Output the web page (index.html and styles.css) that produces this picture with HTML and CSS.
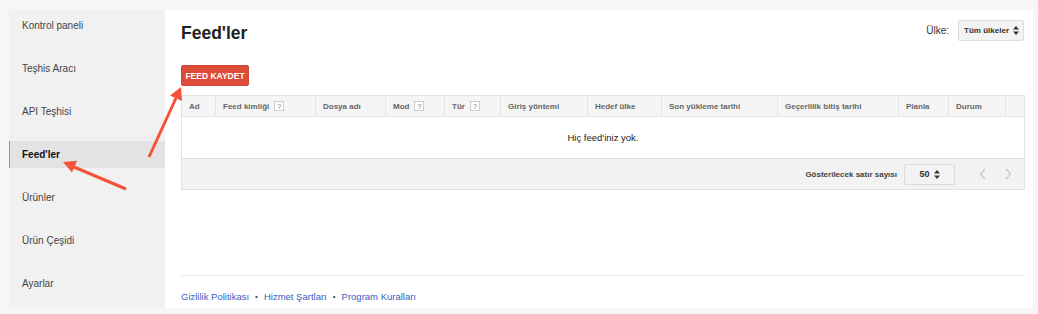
FILE: index.html
```html
<!DOCTYPE html>
<html lang="tr">
<head>
  <meta charset="UTF-8">
  <title>Feed'ler</title>
  <link rel="stylesheet" href="styles.css">
</head>
<body>
  <div class="layout">
    <nav class="sidebar">
      <a class="nav-item" href="#">Kontrol paneli</a>
      <a class="nav-item" href="#">Teşhis Aracı</a>
      <a class="nav-item" href="#">API Teşhisi</a>
      <a class="nav-item active" href="#">Feed'ler</a>
      <a class="nav-item" href="#">Ürünler</a>
      <a class="nav-item" href="#">Ürün Çeşidi</a>
      <a class="nav-item" href="#">Ayarlar</a>
    </nav>

    <main class="main">
      <div class="page-head">
        <h1>Feed'ler</h1>
        <div class="country">
          <span>Ülke:</span>
          <div class="select">Tüm ülkeler
            <svg width="6" height="9" viewBox="0 0 6 9"><path d="M3 0 L6 3.5 H0 Z M3 9 L6 5.5 H0 Z" fill="#333"/></svg>
          </div>
        </div>
      </div>

      <button class="btn-red">FEED KAYDET</button>

      <div class="feed-table">
        <div class="thead">
          <div class="th">Ad</div>
          <div class="th">Feed kimliği <span class="help">?</span></div>
          <div class="th">Dosya adı</div>
          <div class="th">Mod <span class="help">?</span></div>
          <div class="th">Tür <span class="help">?</span></div>
          <div class="th">Giriş yöntemi</div>
          <div class="th">Hedef ülke</div>
          <div class="th">Son yükleme tarihi</div>
          <div class="th">Geçerlilik bitiş tarihi</div>
          <div class="th">Planla</div>
          <div class="th">Durum</div>
          <div class="th"></div>
        </div>
        <div class="empty">Hiç feed'iniz yok.</div>
        <div class="tfoot">
          <span class="rows-label">Gösterilecek satır sayısı</span>
          <div class="rows-select">50
            <svg width="6" height="9" viewBox="0 0 6 9"><path d="M3 0 L6 3.5 H0 Z M3 9 L6 5.5 H0 Z" fill="#333"/></svg>
          </div>
          <div class="pager">
            <svg width="8" height="12" viewBox="0 0 8 12"><polyline points="6,1 1.5,6 6,11" fill="none" stroke="#c8c8c8" stroke-width="1.3"/></svg>
            <svg width="8" height="12" viewBox="0 0 8 12"><polyline points="2,1 6.5,6 2,11" fill="none" stroke="#c8c8c8" stroke-width="1.3"/></svg>
          </div>
        </div>
      </div>

      <footer class="page-foot">
        <a href="#">Gizlilik Politikası</a>
        <span class="dot">•</span>
        <a href="#">Hizmet Şartları</a>
        <span class="dot">•</span>
        <a href="#">Program Kuralları</a>
      </footer>
    </main>
  </div>

  <!-- annotation arrows drawn over the screenshot -->
  <svg class="arrows" width="1038" height="314" viewBox="0 0 1038 314">
    <g fill="#f4533a" stroke="#f4533a">
      <line x1="149" y1="157" x2="176" y2="98" stroke-width="3"/>
      <polygon points="181,87 182,101 170,95.5" stroke="none"/>
      <line x1="126" y1="189" x2="74" y2="167" stroke-width="3"/>
      <polygon points="63,162 77,160.8 72,172.6" stroke="none"/>
    </g>
  </svg>
</body>
</html>
```

FILE: styles.css
```css
* {
  box-sizing: border-box;
  margin: 0;
  padding: 0;
}

body {
  background: #f6f6f6;
  font-family: 'Liberation Sans', Arial, sans-serif;
  color: #222;
  width: 1038px;
  height: 314px;
  overflow: hidden;
  position: relative;
}

.layout {
  display: flex;
  padding: 10px 5px 6px 9px;
  height: 314px;
}

.sidebar {
  width: 156px;
  background: #f1f1f1;
  display: flex;
  flex-direction: column;
  gap: 16px;
  padding-top: 2px;
}

.nav-item {
  display: flex;
  align-items: center;
  height: 27px;
  padding-left: 12px;
  font-size: 10px;
  color: #444;
  text-decoration: none;
  border-left: 1px solid transparent;
}

.nav-item.active {
  background: #e3e3e3;
  border-left-color: #8393d6;
  color: #111;
  font-weight: bold;
}

.main {
  flex: 1;
  background: #fff;
  padding: 12px 8px 0 16px;
  display: flex;
  flex-direction: column;
}

.page-head {
  display: flex;
  justify-content: space-between;
  align-items: flex-start;
}

.page-head h1 {
  font-size: 17.5px;
  line-height: 22px;
  font-weight: bold;
  color: #222;
}

.country {
  display: flex;
  align-items: center;
  gap: 9px;
  font-size: 10px;
  color: #333;
  margin-top: -2px;
  margin-right: 1px;
}

.select {
  display: flex;
  align-items: center;
  gap: 4px;
  height: 21px;
  padding: 0 4px 0 5px;
  background: #f3f3f3;
  border: 1px solid #dcdcdc;
  border-radius: 2px;
  font-size: 8px;
  font-weight: bold;
  color: #333;
}

.btn-red {
  align-self: flex-start;
  margin-top: 21px;
  height: 21px;
  width: 68px;
  background: #dd4b39;
  border: 1px solid #d14836;
  border-radius: 2px;
  color: #fff;
  font-family: inherit;
  font-size: 8.5px;
  font-weight: bold;
}

.feed-table {
  margin-top: 9px;
  border: 1px solid #e2e2e2;
}

.thead {
  display: grid;
  grid-template-columns: 34px 100px 70px 59px 56px 87px 74px 116px 121px 50px 57px 18px;
  background: #f5f5f5;
  border-bottom: 1px solid #e2e2e2;
  height: 21px;
}

.th {
  display: flex;
  align-items: center;
  gap: 5px;
  padding-left: 7px;
  font-size: 8px;
  font-weight: bold;
  color: #666;
  border-right: 1px solid #e6e6e6;
}

.th:last-child {
  border-right: none;
}

.help {
  display: inline-flex;
  align-items: center;
  justify-content: center;
  width: 10px;
  height: 10px;
  border: 1px solid #ccc;
  background: #fff;
  font-size: 7px;
  font-weight: normal;
  color: #777;
}

.empty {
  height: 42px;
  display: flex;
  align-items: center;
  justify-content: center;
  font-size: 9.5px;
  color: #222;
  border-bottom: 1px solid #e2e2e2;
}

.tfoot {
  height: 30px;
  background: #f2f2f2;
  display: flex;
  align-items: center;
  justify-content: flex-end;
  padding-right: 12px;
}

.rows-label {
  font-size: 8px;
  font-weight: bold;
  color: #444;
}

.rows-select {
  display: flex;
  align-items: center;
  justify-content: center;
  gap: 4px;
  width: 51px;
  height: 21px;
  margin-left: 7px;
  background: #f3f3f3;
  border: 1px solid #dcdcdc;
  border-radius: 2px;
  font-size: 9px;
  font-weight: bold;
  color: #333;
}

.pager {
  display: flex;
  gap: 17px;
  margin-left: 24px;
}

.page-foot {
  margin-top: auto;
  border-top: 1px solid #ebebeb;
  height: 33px;
  display: flex;
  align-items: center;
  gap: 5px;
  padding-top: 8px;
  font-size: 9.5px;
}

.page-foot a {
  color: #3b5bc0;
  text-decoration: none;
}

.dot {
  color: #444;
  font-size: 8px;
  margin: 0 1px;
}

.arrows {
  position: absolute;
  left: 0;
  top: 0;
  pointer-events: none;
}
```
